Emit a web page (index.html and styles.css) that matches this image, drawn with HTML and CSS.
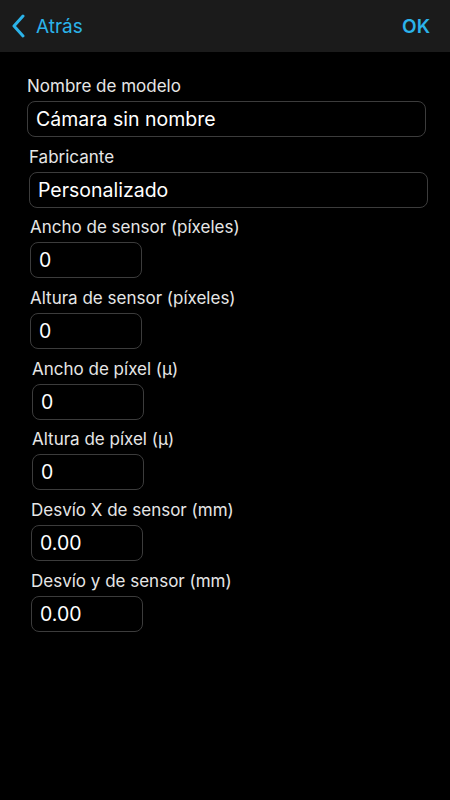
FILE: index.html
```html
<!DOCTYPE html>
<html lang="es">
<head>
    <meta charset="UTF-8">
    <meta name="viewport" content="width=device-width, initial-scale=1.0">
    <title>Cámara</title>
    <link rel="stylesheet" href="styles.css">
</head>
<body>
    <header class="nav-bar">
        <a class="nav-back" href="#">
            <svg class="chevron" width="14" height="24" viewBox="0 0 14 24">
                <path d="M12 2 L3 12 L12 22" fill="none" stroke="currentColor" stroke-width="3" stroke-linecap="round" stroke-linejoin="round"/>
            </svg>
            <span>Atrás</span>
        </a>
        <a class="nav-ok" href="#">OK</a>
    </header>

    <form class="camera-form">
        <div class="field">
            <label class="field-label">Nombre de modelo</label>
            <div class="field-input wide">Cámara sin nombre</div>
        </div>
        <div class="field shift-2">
            <label class="field-label">Fabricante</label>
            <div class="field-input wide">Personalizado</div>
        </div>
        <div class="field shift-3">
            <label class="field-label">Ancho de sensor (píxeles)</label>
            <div class="field-input short">0</div>
        </div>
        <div class="field shift-3">
            <label class="field-label">Altura de sensor (píxeles)</label>
            <div class="field-input short">0</div>
        </div>
        <div class="field shift-5">
            <label class="field-label">Ancho de píxel (µ)</label>
            <div class="field-input short">0</div>
        </div>
        <div class="field shift-5">
            <label class="field-label">Altura de píxel (µ)</label>
            <div class="field-input short">0</div>
        </div>
        <div class="field shift-4">
            <label class="field-label">Desvío X de sensor (mm)</label>
            <div class="field-input short">0.00</div>
        </div>
        <div class="field shift-4">
            <label class="field-label">Desvío y de sensor (mm)</label>
            <div class="field-input short">0.00</div>
        </div>
    </form>
</body>
</html>
```

FILE: styles.css
```css
body {
    font-family: Inter, "Noto Sans", Arial, sans-serif;
    background-color: #000;
    color: #fff;
    margin: 0;
    padding: 0;
}

.nav-bar {
    height: 52px;
    background-color: #1b1b1b;
    display: flex;
    align-items: center;
    justify-content: space-between;
    padding: 0 20px 0 11px;
}

.nav-bar a {
    color: #2bb3e9;
    text-decoration: none;
    font-size: 19px;
}

.nav-back {
    display: flex;
    align-items: center;
    gap: 11px;
}

.chevron {
    display: block;
}

.nav-ok {
    font-weight: 600;
}

.camera-form {
    display: flex;
    flex-direction: column;
    gap: 9.7px;
    padding: 24px 0 0 27px;
}

.field {
    display: flex;
    flex-direction: column;
    gap: 5px;
}

.shift-2 { padding-left: 2px; }
.shift-3 { padding-left: 3px; }
.shift-4 { padding-left: 4px; }
.shift-5 { padding-left: 5px; }

.field-label {
    font-size: 17px;
    line-height: 20px;
    color: #e6e6e6;
}

.field-input {
    box-sizing: border-box;
    height: 36px;
    border: 1px solid #3c3c3c;
    border-radius: 8px;
    padding: 0 8px;
    font-size: 19.5px;
    line-height: 34px;
    color: #fff;
}

.field-input.wide {
    width: 399px;
}

.field-input.short {
    width: 112px;
}
```
